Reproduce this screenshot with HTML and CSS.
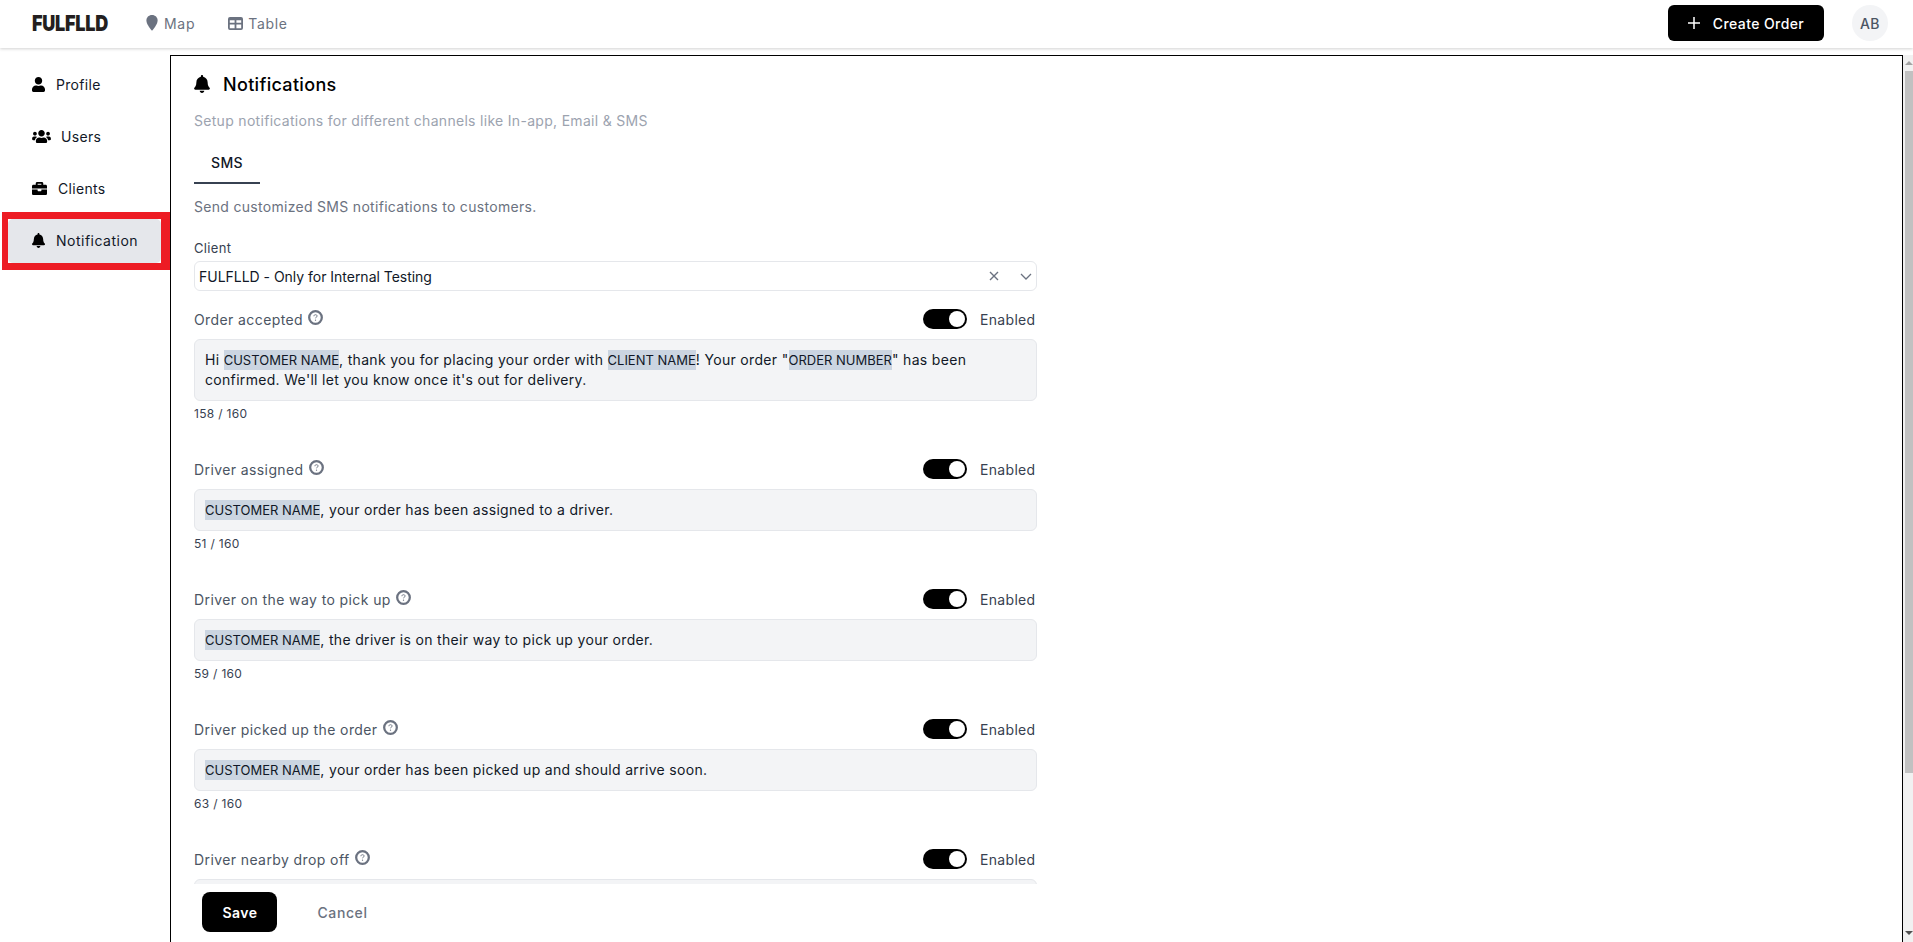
FILE: index.html
```html
<!DOCTYPE html>
<html lang="en">
<head>
<meta charset="utf-8">
<title>Notifications</title>
<link rel="stylesheet" href="styles.css">
</head>
<body>
<svg class="defs" width="0" height="0" aria-hidden="true">
  <symbol id="bell" viewBox="0 0 448 512"><path d="M224 512c35.32 0 63.97-28.65 63.97-64H160.03c0 35.35 28.65 64 63.97 64zm215.39-149.71c-19.32-20.76-55.47-51.99-55.47-154.29 0-77.7-54.48-139.9-127.94-155.16V32c0-17.67-14.32-32-31.98-32s-31.98 14.33-31.98 32v20.84C118.56 68.1 64.08 130.3 64.08 208c0 102.3-36.15 133.53-55.47 154.29-6 6.45-8.66 14.16-8.61 21.71.11 16.4 12.98 32 32.1 32h383.8c19.12 0 32-15.6 32.1-32 .05-7.55-2.61-15.27-8.61-21.71z"/></symbol>
  <symbol id="help" viewBox="0 0 14 14"><circle cx="7" cy="7" r="5.900" fill="none" stroke="currentColor" stroke-width="2.100"/><path d="M5.500 5.800c0-.9.6-1.400 1.500-1.400s1.500.5 1.500 1.300c0 1-1.500 1-1.500 2" fill="none" stroke="currentColor" stroke-width=".9"/><circle cx="7" cy="9.500" r=".6" fill="currentColor"/></symbol>
</svg>

<header class="topbar">
  <div class="brand"><span class="brand-word">FULFLLD</span></div>
  <nav class="topnav">
    <a class="toplink">
      <svg class="ico-map" viewBox="0 0 12 16"><path d="M6 0C2.700 0 .4 2.400.4 5.500.4 9 3.600 12.900 6 15.800c2.400-2.900 5.600-6.800 5.600-10.300C11.600 2.400 9.300 0 6 0z"/></svg>
      <span>Map</span>
    </a>
    <a class="toplink toplink-table">
      <svg class="ico-table" viewBox="0 0 15 13"><path d="M2 0h11a2 2 0 0 1 2 2v9a2 2 0 0 1-2 2H2a2 2 0 0 1-2-2V2a2 2 0 0 1 2-2zm-.2 3.200v2.600h4.800V3.200zm6.600 0v2.600h4.800V3.200zM1.800 7.400v3.800h4.800V7.400zm6.600 0v3.800h4.800V7.400z" fill-rule="evenodd"/></svg>
      <span>Table</span>
    </a>
  </nav>
  <button class="create-btn">
    <svg class="ico-plus" viewBox="0 0 12 12"><path d="M6 0v12M0 6h12"/></svg>
    <span>Create Order</span>
  </button>
  <div class="avatar">AB</div>
</header>

<div class="shell">
  <aside class="sidebar">
    <a class="side-item">
      <svg class="side-ico ico-user" viewBox="0 0 448 512"><path d="M224 256c70.700 0 128-57.300 128-128S294.700 0 224 0 96 57.300 96 128s57.300 128 128 128zm89.600 32h-16.700c-22.200 10.200-46.900 16-72.900 16s-50.600-5.800-72.900-16h-16.700C60.200 288 0 348.200 0 422.400V464c0 26.500 21.500 48 48 48h352c26.500 0 48-21.500 48-48v-41.600c0-74.200-60.200-134.400-134.400-134.400z"/></svg>
      <span>Profile</span>
    </a>
    <a class="side-item">
      <svg class="side-ico ico-users" viewBox="0 0 640 512"><path d="M96 224c35.300 0 64-28.700 64-64s-28.700-64-64-64-64 28.700-64 64 28.700 64 64 64zm448 0c35.300 0 64-28.700 64-64s-28.700-64-64-64-64 28.700-64 64 28.700 64 64 64zm32 32h-64c-17.600 0-33.500 7.100-45.100 18.600 40.300 22.100 68.900 62 75.100 109.400h66c17.700 0 32-14.300 32-32v-32c0-35.300-28.700-64-64-64zm-256 0c61.900 0 112-50.100 112-112S381.900 32 320 32 208 82.100 208 144s50.100 112 112 112zm76.800 32h-8.300c-20.800 10-43.900 16-68.500 16s-47.600-6-68.500-16h-8.300C179.600 288 128 339.600 128 403.200V432c0 26.500 21.500 48 48 48h288c26.500 0 48-21.500 48-48v-28.800c0-63.600-51.600-115.200-115.200-115.200zm-223.700-13.400C161.500 263.100 145.600 256 128 256H64c-35.300 0-64 28.700-64 64v32c0 17.700 14.300 32 32 32h65.900c6.300-47.400 34.900-87.300 75.200-109.400z"/></svg>
      <span>Users</span>
    </a>
    <a class="side-item">
      <svg class="side-ico ico-case" viewBox="0 0 512 512"><path d="M320 336c0 8.840-7.160 16-16 16h-96c-8.840 0-16-7.160-16-16v-48H0v144c0 25.600 22.400 48 48 48h416c25.600 0 48-22.400 48-48V288H320v48zm144-208h-80V80c0-25.600-22.400-48-48-48H176c-25.600 0-48 22.400-48 48v48H48c-25.600 0-48 22.400-48 48v80h512v-80c0-25.600-22.400-48-48-48zm-144 0H192V96h128v32z"/></svg>
      <span>Clients</span>
    </a>
    <a class="side-item side-item-active">
      <svg class="side-ico ico-bell"><use href="#bell"/></svg>
      <span>Notification</span>
    </a>
  </aside>

  <main class="panel">
    <div class="panel-body">
      <h1 class="title"><svg class="title-ico"><use href="#bell"/></svg><span>Notifications</span></h1>
      <p class="subtitle">Setup notifications for different channels like In-app, Email &amp; SMS</p>
      <div class="tabs"><span class="tab">SMS</span></div>
      <p class="hint">Send customized SMS notifications to customers.</p>

      <label class="field-label">Client</label>
      <div class="select">
        <span class="select-value">FULFLLD - Only for Internal Testing</span>
        <svg class="ico-x" viewBox="0 0 10 10"><path d="M1 1l8 8M9 1l-8 8"/></svg>
        <svg class="ico-chev" viewBox="0 0 12 7"><path d="M1 1l5 5 5-5"/></svg>
      </div>

      <section class="rule rule-first">
        <div class="rule-head">
          <span class="rule-name">Order accepted</span><svg class="help"><use href="#help"/></svg>
          <span class="switch"><i class="knob"></i></span><span class="switch-label">Enabled</span>
        </div>
        <div class="message">Hi <mark>CUSTOMER NAME</mark>, thank you for placing your order with <mark>CLIENT NAME</mark>! Your order "<mark>ORDER NUMBER</mark>" has been<br>confirmed. We'll let you know once it's out for delivery.</div>
        <div class="count">158 / 160</div>
      </section>

      <section class="rule">
        <div class="rule-head">
          <span class="rule-name">Driver assigned</span><svg class="help"><use href="#help"/></svg>
          <span class="switch"><i class="knob"></i></span><span class="switch-label">Enabled</span>
        </div>
        <div class="message"><mark>CUSTOMER NAME</mark>, your order has been assigned to a driver.</div>
        <div class="count">51 / 160</div>
      </section>

      <section class="rule">
        <div class="rule-head">
          <span class="rule-name">Driver on the way to pick up</span><svg class="help"><use href="#help"/></svg>
          <span class="switch"><i class="knob"></i></span><span class="switch-label">Enabled</span>
        </div>
        <div class="message"><mark>CUSTOMER NAME</mark>, the driver is on their way to pick up your order.</div>
        <div class="count">59 / 160</div>
      </section>

      <section class="rule">
        <div class="rule-head">
          <span class="rule-name">Driver picked up the order</span><svg class="help"><use href="#help"/></svg>
          <span class="switch"><i class="knob"></i></span><span class="switch-label">Enabled</span>
        </div>
        <div class="message"><mark>CUSTOMER NAME</mark>, your order has been picked up and should arrive soon.</div>
        <div class="count">63 / 160</div>
      </section>

      <section class="rule">
        <div class="rule-head">
          <span class="rule-name">Driver nearby drop off</span><svg class="help"><use href="#help"/></svg>
          <span class="switch"><i class="knob"></i></span><span class="switch-label">Enabled</span>
        </div>
        <div class="message message-empty"></div>
      </section>
    </div>
    <footer class="panel-foot">
      <button class="save-btn">Save</button>
      <button class="cancel-btn">Cancel</button>
    </footer>
  </main>

  <div class="scrollbar" aria-hidden="true">
    <span class="arrow-up"></span>
    <span class="thumb"></span>
    <span class="arrow-down"></span>
  </div>
</div>
</body>
</html>
```
FILE: styles.css
```css
* { box-sizing: border-box; }
html, body { height: 100%; }
body {
  margin: 0;
  height: 942px;
  overflow: hidden;
  display: flex;
  flex-direction: column;
  background: #fff;
  color: #111827;
  font-family: Inter, "Noto Sans", "Liberation Sans", sans-serif;
  font-size: 14px;
  letter-spacing: .32px;
}
.defs { position: absolute; }

.topbar {
  flex: none;
  height: 48px;
  display: flex;
  align-items: center;
  padding: 0 25px 2px 32px;
  background: #fff;
  box-shadow: 0 1px 3px rgba(0, 0, 0, .18);
  position: relative;
}
.brand { width: 76px; height: 22px; line-height: 22px; white-space: nowrap; }
.brand-word {
  display: inline-block;
  font-size: 22px;
  font-weight: 900;
  letter-spacing: -.3px;
  color: #231f20;
  transform: scaleX(.82);
  transform-origin: left center;
}
.topnav { display: flex; align-items: center; margin-left: 38px; flex: 1; }
.toplink { display: flex; align-items: center; color: #6b7280; }
.toplink-table { margin-left: 33px; }
.ico-map { width: 12px; height: 16px; fill: #6b7280; margin-right: 6px; }
.ico-table { width: 15px; height: 13px; fill: #6b7280; margin-right: 5px; }
.toplink span { letter-spacing: .7px; }
.create-btn {
  width: 156px;
  height: 36px;
  display: flex;
  align-items: center;
  justify-content: center;
  gap: 13px;
  background: #000;
  color: #fff;
  border: 0;
  border-radius: 6px;
  font: inherit;
  font-weight: 500;
  letter-spacing: .4px;
}
.ico-plus { width: 12px; height: 12px; stroke: #fff; stroke-width: 1.5; fill: none; }
.avatar {
  width: 36px;
  height: 36px;
  margin-left: 28px;
  border-radius: 50%;
  background: #f3f4f6;
  color: #4b5563;
  display: flex;
  align-items: center;
  justify-content: center;
  font-weight: 500;
}

.shell { flex: 1; min-height: 0; display: flex; }

.sidebar {
  flex: none;
  width: 170px;
  padding: 15px 9px 0 8px;
  display: flex;
  flex-direction: column;
  gap: 8px;
}
.side-item {
  height: 44px;
  display: flex;
  align-items: center;
  padding: 0 0 1px 24px;
  color: #111827;
  border-radius: 5px;
  position: relative;
}
.side-item-active { background: #e5e7eb; letter-spacing: .5px; }
.side-item-active::after {
  content: "";
  position: absolute;
  inset: -7px -9px -7px -6px;
  border: 7px solid #ed1c24;
  border-right-width: 9px;
  border-left-width: 6px;
}
.side-ico { fill: #000; flex: none; }
.ico-user { width: 13px; height: 15px; margin-right: 11px; }
.ico-users { width: 19px; height: 15px; margin-right: 10px; }
.ico-case { width: 15px; height: 15px; margin-right: 11px; }
.ico-bell { width: 13px; height: 15px; margin-right: 11px; }

.panel {
  flex: none;
  width: 1733px;
  margin-top: 7px;
  border: 1px solid #000;
  border-width: 1.5px 1.5px 0;
  display: flex;
  flex-direction: column;
  min-height: 0;
}
.panel-body { flex: 1; min-height: 0; overflow: hidden; padding: 0 0 0 23px; }
.title {
  margin: 16px 0 0;
  height: 24px;
  display: flex;
  align-items: center;
  font-size: 18px;
  font-weight: 500;
  color: #000;
}
.title-ico { width: 16px; height: 18px; fill: #000; margin-right: 13px; }
.subtitle { margin: 15px 0 0; line-height: 20px; color: #9ca3af; letter-spacing: .3px; }
.tabs { display: flex; margin-top: 11px; }
.tab {
  width: 66px;
  height: 42px;
  display: flex;
  align-items: center;
  justify-content: center;
  color: #111827;
  font-weight: 500;
  border-bottom: 2px solid #374151;
}
.hint { margin: 13px 0 0; line-height: 20px; color: #6b7280; letter-spacing: .3px; }
.field-label {
  display: block;
  margin-top: 23px;
  line-height: 16px;
  font-size: 13px;
  color: #374151;
}
.select {
  width: 843px;
  height: 30px;
  margin-top: 5px;
  padding: 0 4px 0 4px;
  border: 1px solid #e5e7eb;
  border-radius: 6px;
  display: flex;
  align-items: center;
}
.select-value { flex: 1; color: #111827; letter-spacing: -.02px; }
.ico-x { width: 10px; height: 10px; stroke: #6b7280; stroke-width: 1.4; fill: none; margin-right: 21px; }
.ico-chev { width: 12px; height: 7px; stroke: #6b7280; stroke-width: 1.3; fill: none; }

.rule { width: 843px; margin-top: 37px; }
.rule-first { margin-top: 18px; }
.rule-head { height: 20px; display: flex; align-items: center; }
.rule-name { color: #4b5563; letter-spacing: .4px; }
.help { width: 15px; height: 15px; margin: -4px 0 0 5px; color: #6b7280; flex: none; }
.switch {
  width: 44px;
  height: 20px;
  margin-left: auto;
  border-radius: 10px;
  background: #000;
  display: flex;
  align-items: center;
  justify-content: flex-end;
  padding-right: 2px;
}
.knob { width: 16px; height: 16px; border-radius: 50%; background: #fff; }
.switch-label { width: 57px; margin-left: 13px; color: #374151; white-space: nowrap; }
.message {
  margin-top: 10px;
  padding: 10px;
  line-height: 20px;
  background: #f3f4f6;
  border: 1px solid #e5e7eb;
  border-radius: 6px;
  color: #111827;
}
.message-empty { height: 42px; }
mark {
  background: #cbd5e1;
  color: inherit;
  font-size: 13px;
  letter-spacing: 0;
  padding: 2px 0;
}
.count { margin-top: 5px; line-height: 16px; font-size: 12px; color: #374151; }

.panel-foot {
  flex: none;
  height: 58px;
  padding: 8px 0 0 30.500px;
  display: flex;
  align-items: flex-start;
  background: #fff;
}
.save-btn {
  width: 75px;
  height: 40px;
  padding: 0 0 0 2px;
  background: #000;
  color: #fff;
  border: 0;
  border-radius: 8px;
  font: inherit;
  font-weight: 600;
  letter-spacing: .5px;
}
.cancel-btn {
  margin-left: 41px;
  height: 40px;
  padding: 0;
  background: none;
  border: 0;
  color: #6b7280;
  font: inherit;
  font-weight: 500;
  letter-spacing: .6px;
}

.scrollbar {
  flex: none;
  width: 10px;
  margin-top: 7px;
  background: #f1f1f1;
  display: flex;
  flex-direction: column;
  align-items: flex-end;
  position: relative;
}
.thumb { width: 8px; height: 702px; background: #c1c1c1; flex: none; margin-top: 6px; }
.arrow-up, .arrow-down { width: 0; height: 0; flex: none; border-left: 4px solid transparent; border-right: 4px solid transparent; }
.arrow-up { margin-top: 6px; border-bottom: 4px solid #a3a3a3; }
.arrow-down { margin-top: auto; margin-bottom: 7px; border-top: 4px solid #505050; }
```
